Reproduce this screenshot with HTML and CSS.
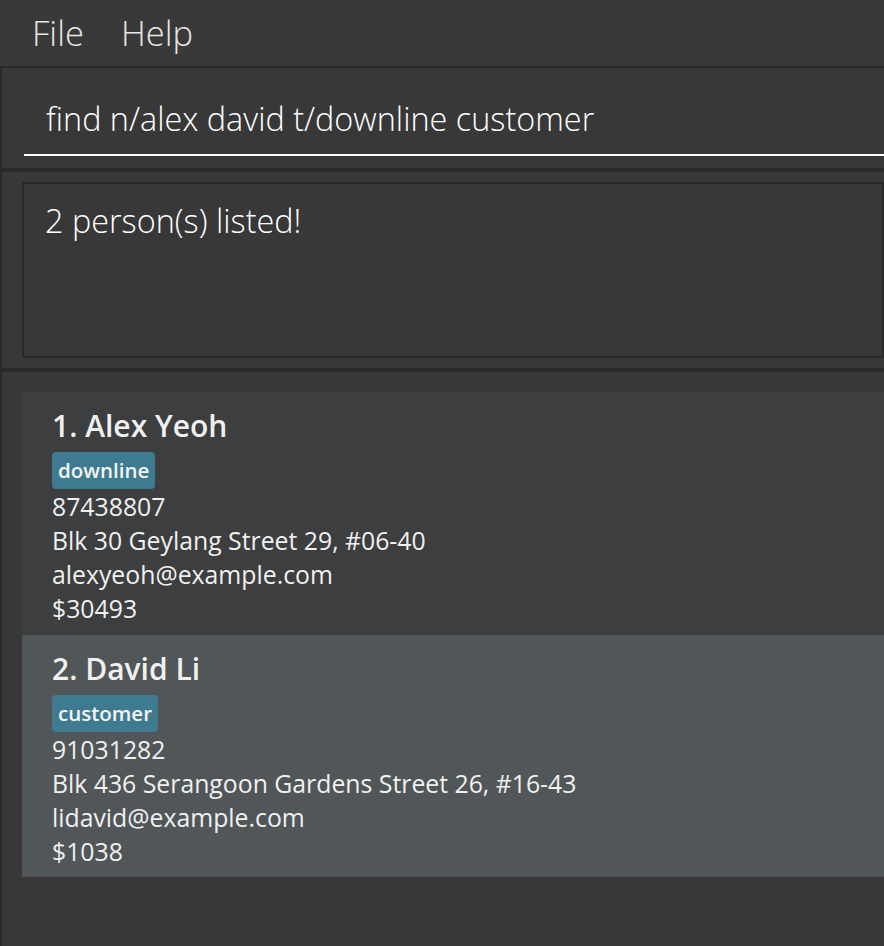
FILE: index.html
```html
<!DOCTYPE html>
<html lang="en">
<head>
<meta charset="utf-8">
<title>Address App</title>
<link rel="stylesheet" href="styles.css">
</head>
<body>
<div class="app">
  <div class="menubar">
    <span class="menu-item">File</span>
    <span class="menu-item">Help</span>
  </div>
  <div class="panel command-panel">
    <div class="command-box">find n/alex david t/downline customer</div>
  </div>
  <div class="panel result-panel">
    <div class="result-box">2 person(s) listed!</div>
  </div>
  <div class="panel list-panel">
    <div class="card even">
      <div class="name">1. Alex Yeoh</div>
      <div class="tags"><span class="tag">downline</span></div>
      <div class="line">87438807</div>
      <div class="line">Blk 30 Geylang Street 29, #06-40</div>
      <div class="line">alexyeoh@example.com</div>
      <div class="line">$30493</div>
    </div>
    <div class="card odd">
      <div class="name">2. David Li</div>
      <div class="tags"><span class="tag">customer</span></div>
      <div class="line">91031282</div>
      <div class="line">Blk 436 Serangoon Gardens Street 26, #16-43</div>
      <div class="line">lidavid@example.com</div>
      <div class="line">$1038</div>
    </div>
  </div>
</div>
</body>
</html>
```
FILE: styles.css
```css
html, body {
  margin: 0;
  padding: 0;
  background: #383838;
  height: 946px;
  overflow: hidden;
}

.app {
  display: flex;
  flex-direction: column;
  height: 946px;
  font-family: "Open Sans", "Noto Sans", sans-serif;
}

.menubar {
  height: 66px;
  display: flex;
  align-items: center;
  gap: 37px;
  padding-left: 32px;
  border-bottom: 2px solid #2a2a2a;
  background: #393939;
}

.menu-item {
  font-size: 34.5px;
  font-weight: 300;
  color: #e6e6e6;
  line-height: 40px;
}

.panel {
  border-left: 2px solid #2a2a2a;
  background: #383838;
}

.command-panel {
  height: 100px;
  padding-left: 22px;
  box-sizing: border-box;
}

.command-box {
  height: 88px;
  box-sizing: border-box;
  padding: 30px 0 0 22px;
  border-bottom: 2px solid #ffffff;
  font-size: 32.4px;
  font-weight: 300;
  line-height: 40px;
  color: #ffffff;
  white-space: nowrap;
}

.result-panel {
  border-top: 4px solid #2a2a2a;
  height: 200px;
  box-sizing: border-box;
  padding: 10px 0 10px 20px;
}

.result-box {
  height: 100%;
  box-sizing: border-box;
  border: 2px solid #2a2a2a;
  padding: 16px 0 0 21px;
  font-size: 32.4px;
  font-weight: 300;
  line-height: 40px;
  color: #ffffff;
}

.list-panel {
  border-top: 4px solid #2a2a2a;
  flex: 1;
  padding: 20px 0 0 20px;
}

.card {
  padding: 14px 0 10px 30px;
  color: #ffffff;
}

.card.even {
  background: #3c3e3f;
}

.card.odd {
  background: #515658;
  padding-bottom: 9px;
}

.name {
  font-size: 30px;
  font-weight: 600;
  line-height: 40px;
  color: #f0f0f0;
}

.tags {
  display: flex;
  margin-top: 6px;
}

.tag {
  background: #3e7b91;
  color: #f4f4f4;
  font-size: 20.5px;
  font-weight: 600;
  line-height: 37px;
  height: 37px;
  padding: 0 6px;
  border-radius: 4px;
}

.line {
  font-size: 24.8px;
  line-height: 34px;
  color: #f0f0f0;
  white-space: nowrap;
}
```
